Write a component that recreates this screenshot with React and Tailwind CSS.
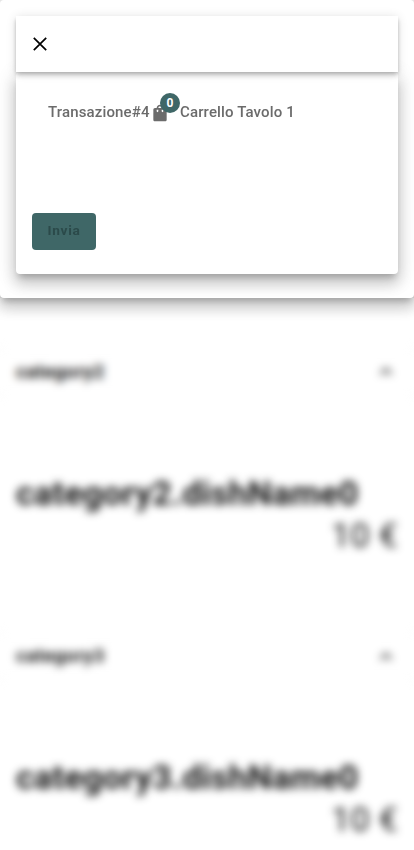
const CARD_SHADOW =
  "shadow-[0_6px_6px_-3px_rgba(0,0,0,0.2),0_10px_14px_1px_rgba(0,0,0,0.14),0_4px_18px_3px_rgba(0,0,0,0.12)]";
const BAR_SHADOW =
  "shadow-[0_2px_4px_-1px_rgba(0,0,0,0.2),0_4px_5px_0_rgba(0,0,0,0.14),0_1px_10px_0_rgba(0,0,0,0.12)]";

function CloseIcon() {
  return (
    <svg className="size-6" viewBox="0 0 24 24" fill="none" stroke="currentColor" strokeWidth="1.7">
      <path d="M5.800 5.800L18.200 18.200M18.200 5.800L5.800 18.200" />
    </svg>
  );
}

function BagIcon() {
  return (
    <svg className="mt-[2px] size-5" viewBox="0 0 24 24" fill="currentColor">
      <path d="M18 6h-2c0-2.210-1.790-4-4-4S8 3.790 8 6H6c-1.100 0-2 .9-2 2v12c0 1.100.9 2 2 2h12c1.100 0 2-.9 2-2V8c0-1.100-.9-2-2-2zm-8 4c0 .55-.45 1-1 1s-1-.45-1-1V8h2v2zm2-6c1.100 0 2 .9 2 2h-4c0-1.100.9-2 2-2zm4 6c0 .55-.45 1-1 1s-1-.45-1-1V8h2v2z" />
    </svg>
  );
}

function Category({ name }) {
  return (
    <section className="h-[284.500px]">
      <div className="bg-[#e4e4e4]">
        <div className="flex h-12 items-center justify-between rounded bg-white px-4 pt-px">
          <span className="text-[19px] font-bold tracking-[0.3px]">{name}</span>
          <svg className="size-6" viewBox="0 0 24 24" fill="currentColor">
            <path d="M12 7.500l-6 6 1.410 1.410L12 10.330l4.590 4.580L18 13.500z" />
          </svg>
        </div>
      </div>
      <div className="px-4 pt-[76px]">
        <div className="text-[34px] leading-[42px] font-bold tracking-[0.25px] whitespace-nowrap">{name}.dishName0</div>
        <div className="text-right text-[34px] leading-[42px] tracking-[0.25px]">10 €</div>
      </div>
    </section>
  );
}

export default function App() {
  return (
    <div className="relative h-[850px] overflow-hidden bg-white font-['Roboto',sans-serif]">
      <div className="bg-[#eee]">
        <div className={`relative z-10 h-[298px] rounded bg-white p-4 ${CARD_SHADOW}`}>
          <header className={`relative z-10 flex h-14 items-center bg-white px-3 text-black ${BAR_SHADOW}`}>
            <CloseIcon />
          </header>
          <main className={`flex h-[202px] flex-col items-start justify-between rounded bg-white px-4 pt-7 pb-6 ${CARD_SHADOW}`}>
            <div className="flex h-6 items-center px-4 text-[15px] font-medium tracking-[0.14px] whitespace-nowrap text-[#6b6b6b]">
              <span className="w-[102px]">Transazione#4</span>
              <div className="relative flex w-[30px] items-center">
                <BagIcon />
                <span className="absolute -top-[8px] left-[10px] flex size-5 items-center justify-center rounded-full bg-[#3f6767] text-xs font-bold tracking-normal text-white">0</span>
              </div>
              <span>Carrello Tavolo 1</span>
            </div>
            <button className="h-[37px] w-16 rounded bg-[#3f6767] pb-[3px] text-[13.700px] font-bold tracking-[0.7px] text-[#2b4a4a]">Invia</button>
          </main>
        </div>
      </div>
      <div className="pt-[49.500px] text-[#111] blur-[4px]">
        <Category name="category2" />
        <Category name="category3" />
      </div>
    </div>
  );
}
